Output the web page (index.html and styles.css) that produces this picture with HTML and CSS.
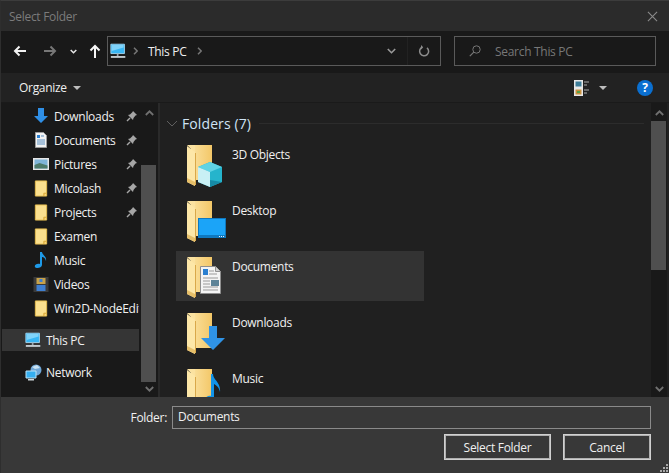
FILE: index.html
```html
<!DOCTYPE html>
<html lang="en">
<head>
    <meta charset="UTF-8">
    <title>Select Folder</title>
    <link rel="stylesheet" href="styles.css">
</head>
<body>
    <svg class="defs" width="0" height="0">
        <defs>
            <linearGradient id="backfill" x1="0" y1="0" x2="1" y2="0">
                <stop offset="0" stop-color="#fbe2a0"/>
                <stop offset="1" stop-color="#f3c768"/>
            </linearGradient>
            <symbol id="navfolder" viewBox="0 0 14 18">
                <path d="M1 1h12v16H1z" fill="#fbe08e" stroke="#e8bd4f"/>
                <path d="M10 17v-3h3" fill="#f3c95f" stroke="#d9a93a"/>
            </symbol>
            <symbol id="monitor" viewBox="0 0 20 18">
                <path d="M1 1h16v11H1z" fill="#38b6f4" stroke="#a9dcf5"/>
                <path d="M2 2h14v3L2 9z" fill="#7fd3fa"/>
                <path d="M8 12h2v3H8z" fill="#9aa7b0"/>
                <path d="M1 15h17v2H1z" fill="#d4dde2"/>
            </symbol>
            <symbol id="bigfolder" viewBox="0 0 26 42">
                <path d="M4 0h21v35H4z" fill="url(#backfill)"/>
                <path d="M0 0h8v8z" fill="#fbe2a0"/>
                <path d="M0 1l8 6v34l-8-4z" fill="#fde7a8"/>
                <path d="M0 33l8 4v4l-8-4z" fill="#e6bf6a"/>
                <path d="M8.500 8v32" stroke="#d9a84a"/>
            </symbol>
            <symbol id="pin" viewBox="0 0 12 12">
                <path d="M7 1l4 4-1.500.5L7.500 8 7 10 2 5l2-.500L6.500 2z" fill="#a6a6a6"/>
                <path d="M4 8l-3 3" stroke="#a6a6a6" stroke-width="1.500"/>
            </symbol>
        </defs>
    </svg>

    <div class="dialog">
        <header class="titlebar">
            <span class="title">Select Folder</span>
            <svg class="close" width="11" height="11" viewBox="0 0 12 12"><path d="M1 1l10 10M11 1L1 11" stroke="#8a8a8a" stroke-width="1.200"/></svg>
        </header>

        <div class="navbar">
            <svg class="nav-btn" width="14" height="12" viewBox="0 0 14 12"><path d="M13 6H2M6.500 1.500L2 6l4.500 4.500" fill="none" stroke="#f2f2f2" stroke-width="2"/></svg>
            <svg class="nav-btn fwd" width="14" height="12" viewBox="0 0 14 12"><path d="M1 6h11M7.500 1.500L12 6l-4.500 4.500" fill="none" stroke="#777" stroke-width="2"/></svg>
            <svg class="nav-btn drop" width="7" height="5" viewBox="0 0 7 5"><path d="M.700 1l2.800 2.800L6.300 1" fill="none" stroke="#e6e6e6" stroke-width="1.500"/></svg>
            <svg class="nav-btn up" width="12" height="14" viewBox="0 0 12 14"><path d="M6 14V2M1.500 6.500L6 2l4.500 4.500" fill="none" stroke="#f7f7f7" stroke-width="2"/></svg>
            <div class="address">
                <svg class="addr-pc" width="17" height="16"><use href="#monitor"/></svg>
                <svg class="crumb" width="5" height="8" viewBox="0 0 5 8"><path d="M1 .700L4.200 4 1 7.300" fill="none" stroke="#777" stroke-width="1.500"/></svg>
                <span class="addr-text">This PC</span>
                <svg class="crumb" width="5" height="8" viewBox="0 0 5 8"><path d="M1 .700L4.200 4 1 7.300" fill="none" stroke="#777" stroke-width="1.500"/></svg>
                <svg class="addr-drop" width="9" height="6" viewBox="0 0 9 6"><path d="M.800 1L4.500 4.700 8.200 1" fill="none" stroke="#9a9a9a" stroke-width="1.600"/></svg>
                <span class="addr-refresh">
                    <svg width="12" height="12" viewBox="0 0 12 12"><path d="M4.200 2.200A4.500 4.500 0 1 0 9 2.800" fill="none" stroke="#8c8c8c" stroke-width="1.500"/><path d="M3 0l2.200 2.300L3 4.600z" fill="#8c8c8c"/></svg>
                </span>
            </div>
            <div class="search">
                <svg width="12" height="12" viewBox="0 0 12 12"><circle cx="7.500" cy="4.500" r="3.700" fill="none" stroke="#777"/><path d="M4.800 7.200L.8 11.200" stroke="#777" stroke-width="1.200"/></svg>
                <span>Search This PC</span>
            </div>
        </div>

        <div class="toolbar">
            <span class="organize">Organize</span>
            <span class="caret"></span>
            <svg class="views" width="16" height="16" viewBox="0 0 16 16">
                <path d="M0 0h9v16H0z" fill="#e8e8e8"/>
                <path d="M1.500 1.500h6v5h-6z" fill="#3d7d99"/>
                <path d="M1.500 9.500h6v5h-6z" fill="#c8903c"/>
                <path d="M3 11h3v2H3z" fill="#5aa04a"/>
                <path d="M10 2h5M10 5h3M10 10h5M10 13h3" stroke="#aaa"/>
            </svg>
            <span class="caret caret-views"></span>
            <span class="help">?</span>
        </div>

        <div class="panes">
            <nav class="tree">
                <div class="tree-list">
                    <div class="tree-row">
                        <svg class="tree-icon" height="16" viewBox="0 0 16 16"><path d="M5 0h6v8h4l-7 7-7-7h4z" fill="#2f8fe6"/></svg>
                        <span class="tree-label">Downloads</span>
                        <svg class="pin" width="12" height="12"><use href="#pin"/></svg>
                    </div>
                    <div class="tree-row">
                        <svg class="tree-icon" height="16" viewBox="0 0 16 16"><path d="M2.500.500h8l3 3v12h-11z" fill="#f2f2f2" stroke="#9a9a9a"/><path d="M4 3h3v3H4z" fill="#2a7fd0"/><path d="M8 4h3M4 8h8M4 10h8M4 12h8" stroke="#5b8fc0"/></svg>
                        <span class="tree-label">Documents</span>
                        <svg class="pin" width="12" height="12"><use href="#pin"/></svg>
                    </div>
                    <div class="tree-row">
                        <svg class="tree-icon" height="16" viewBox="0 0 16 16"><path d="M0 2h16v12H0z" fill="#e6e6e6"/><path d="M1.500 3.500h13v9h-13z" fill="#7fb4d8"/><path d="M1.500 9l5-2 8 2.500v3h-13z" fill="#4d7a6a"/></svg>
                        <span class="tree-label">Pictures</span>
                        <svg class="pin" width="12" height="12"><use href="#pin"/></svg>
                    </div>
                    <div class="tree-row">
                        <svg class="tree-icon" height="17"><use href="#navfolder"/></svg>
                        <span class="tree-label">Micolash</span>
                        <svg class="pin" width="12" height="12"><use href="#pin"/></svg>
                    </div>
                    <div class="tree-row">
                        <svg class="tree-icon" height="17"><use href="#navfolder"/></svg>
                        <span class="tree-label">Projects</span>
                        <svg class="pin" width="12" height="12"><use href="#pin"/></svg>
                    </div>
                    <div class="tree-row">
                        <svg class="tree-icon" height="17"><use href="#navfolder"/></svg>
                        <span class="tree-label">Examen</span>
                    </div>
                    <div class="tree-row">
                        <svg class="tree-icon" height="18" viewBox="0 0 14 18"><path d="M6 1h2c0 3 5 4 4 9-1-3-2-4-4-4v8c0 3-6 4-7 2s2-4 5-3z" fill="#1e9ae8"/></svg>
                        <span class="tree-label">Music</span>
                    </div>
                    <div class="tree-row">
                        <svg class="tree-icon" height="15" viewBox="0 0 15 15"><path d="M0 0h15v15H0z" fill="#3a3a3a"/><path d="M3 1h9v6H3z" fill="#c7a24a"/><path d="M3 8h9v6H3z" fill="#3f7fd0"/><path d="M6 2h3v3H6z" fill="#3f7fd0"/></svg>
                        <span class="tree-label">Videos</span>
                    </div>
                    <div class="tree-row">
                        <svg class="tree-icon" height="17"><use href="#navfolder"/></svg>
                        <span class="tree-label">Win2D-NodeEditor</span>
                    </div>
                    <div class="tree-row root selected">
                        <svg class="tree-icon" height="16"><use href="#monitor"/></svg>
                        <span class="tree-label">This PC</span>
                    </div>
                    <div class="tree-row root network">
                        <svg class="tree-icon" height="17" viewBox="0 0 17 17"><circle cx="11" cy="6" r="5.500" fill="#6fa6d6"/><path d="M7 3l5-2 3 3-5 1z" fill="#c9e2f2"/><path d="M1 7h10v7H1z" fill="#35aef0" stroke="#bde3f7"/><path d="M3 15h6v1.500H3z" fill="#cfd8dd"/></svg>
                        <span class="tree-label">Network</span>
                    </div>
                </div>
                <div class="scrollbar">
                    <svg class="arrow" width="9" height="6" viewBox="0 0 9 6"><path d="M.800 5L4.500 1.300 8.200 5" fill="none" stroke="#707070" stroke-width="1.800"/></svg>
                    <div class="track tree-track"><div class="thumb"></div></div>
                    <svg class="arrow" width="9" height="6" viewBox="0 0 9 6"><path d="M.800 1L4.500 4.700 8.200 1" fill="none" stroke="#707070" stroke-width="1.800"/></svg>
                </div>
            </nav>

            <main class="content">
                <div class="listing">
                    <div class="group-head">
                        <svg width="12" height="7" viewBox="0 0 12 7"><path d="M1 1l5 5 5-5" fill="none" stroke="#5f5f5f"/></svg>
                        <span class="group-title">Folders (7)</span>
                        <span class="group-line"></span>
                    </div>
                    <div class="item">
                        <div class="thumbicon">
                            <svg width="26" height="42"><use href="#bigfolder"/></svg>
                            <svg class="badge" width="24" height="25" viewBox="0 0 24 25"><path d="M12 0l12 5v15l-12 5L0 20V5z" fill="#25b4cc"/><path d="M12 0l12 5-12 5L0 5z" fill="#5fd3e4"/><path d="M0 5l12 5v15L0 20z" fill="#c9f0f5"/><path d="M12 18l12 2-12 5z" fill="#168aa6"/></svg>
                        </div>
                        <span class="item-name">3D Objects</span>
                    </div>
                    <div class="item">
                        <div class="thumbicon">
                            <svg width="26" height="42"><use href="#bigfolder"/></svg>
                            <svg class="badge badge-desktop" width="28" height="20" viewBox="0 0 28 20"><path d="M0 0h28v20H0z" fill="#0f78bf"/><path d="M1 1h26v16H1z" fill="#1ba4f8"/><path d="M21 18h1v1h-1zM23 18h1v1h-1zM25 18h1v1h-1z" fill="#e8f4fb"/></svg>
                        </div>
                        <span class="item-name">Desktop</span>
                    </div>
                    <div class="item selected">
                        <div class="thumbicon">
                            <svg width="26" height="42"><use href="#bigfolder"/></svg>
                            <svg class="badge badge-doc" width="21" height="28" viewBox="0 0 21 28"><path d="M.500.500h15l5 5v22H.500z" fill="#f4f4f4" stroke="#8f8f8f"/><path d="M15.500.500v5h5" fill="#cfcfcf" stroke="#8f8f8f"/><path d="M3 3h5v6H3z" fill="#2a7fd0"/><path d="M9 5h5M9 8h8M3 12h15M3 15h7M3 18h7M3 21h15M3 24h15" stroke="#9a9a9a"/><path d="M11 14h8v6h-8z" fill="#5d8397"/></svg>
                        </div>
                        <span class="item-name">Documents</span>
                    </div>
                    <div class="item">
                        <div class="thumbicon">
                            <svg width="26" height="42"><use href="#bigfolder"/></svg>
                            <svg class="badge badge-down" width="24" height="24" viewBox="0 0 24 24"><path d="M8 0h8v12h8L12 24 0 12h8z" fill="#2f93e6"/></svg>
                        </div>
                        <span class="item-name">Downloads</span>
                    </div>
                    <div class="item">
                        <div class="thumbicon">
                            <svg width="26" height="42"><use href="#bigfolder"/></svg>
                            <svg class="badge badge-music" width="17" height="30" viewBox="0 0 17 30"><path d="M6 0h2c0 6 8 8 7 18-1-5-4-7-6-8v14c0 4-8 6-9 3s3-6 6-5z" fill="#1193e8"/></svg>
                        </div>
                        <span class="item-name">Music</span>
                    </div>
                </div>
                <div class="scrollbar main-scroll">
                    <svg class="arrow" width="9" height="6" viewBox="0 0 9 6"><path d="M.800 5L4.500 1.300 8.200 5" fill="none" stroke="#707070" stroke-width="1.800"/></svg>
                    <div class="track main-track"><div class="thumb"></div></div>
                    <svg class="arrow" width="9" height="6" viewBox="0 0 9 6"><path d="M.800 1L4.500 4.700 8.200 1" fill="none" stroke="#707070" stroke-width="1.800"/></svg>
                </div>
            </main>
        </div>

        <footer class="footer">
            <div class="folder-row">
                <label class="folder-label">Folder:</label>
                <div class="folder-input">Documents</div>
            </div>
            <div class="buttons">
                <button class="btn btn-select">Select Folder</button>
                <button class="btn btn-cancel">Cancel</button>
            </div>
            <svg class="grip" width="9" height="9" viewBox="0 0 9 9"><path d="M6 0h2v2H6zM3 3h2v2H3zM6 3h2v2H6zM0 6h2v2H0zM3 6h2v2H3zM6 6h2v2H6z" fill="#a8a8a8"/></svg>
        </footer>
    </div>
</body>
</html>
```

FILE: styles.css
```css
html,
body {
    margin: 0;
    padding: 0;
    overflow: hidden;
}

body {
    width: 669px;
    height: 473px;
    background: #2b2b2b;
    font-family: "Open Sans", "Noto Sans", sans-serif;
    font-size: 12px;
    letter-spacing: -0.3px;
    color: #f0f0f0;
}

.defs {
    position: absolute;
}

svg {
    display: block;
    flex: none;
}

.dialog {
    display: flex;
    flex-direction: column;
    height: 473px;
    box-sizing: border-box;
    border-top: 1px solid #3c3c3c;
    border-left: 1px solid #2e2e2e;
}

/* title */
.titlebar {
    display: flex;
    align-items: center;
    justify-content: space-between;
    height: 30px;
    padding: 0 11px 0 8px;
    background: #2b2b2b;
    flex: none;
}

.title {
    color: #7b7b7b;
}

/* back / forward / address / search */
.navbar {
    display: flex;
    align-items: center;
    height: 42px;
    box-sizing: border-box;
    padding-bottom: 2px;
    background: #191919;
    flex: none;
}

.nav-btn {
    margin-left: 12px;
}

.nav-btn.fwd {
    margin-left: 16px;
}

.nav-btn.drop {
    margin-left: 13px;
}

.nav-btn.up {
    margin-left: 12px;
}

.address,
.search {
    display: flex;
    align-items: center;
    height: 30px;
    box-sizing: border-box;
    border: 1px solid #5a5a5a;
}

.address {
    width: 334px;
    margin-left: 6px;
    padding-left: 2px;
}

.addr-text {
    margin: 0 10px;
}

.addr-pc + .crumb {
    margin-left: 6px;
}

.addr-drop {
    margin-left: auto;
    margin-right: 11px;
}

.addr-refresh {
    display: flex;
    align-items: center;
    justify-content: center;
    width: 32px;
    height: 28px;
    border-left: 1px solid #222;
}

.search {
    width: 202px;
    margin-left: 13px;
    padding-left: 14px;
    color: #777;
}

.search span {
    margin-left: 14px;
}

/* organize row */
.toolbar {
    display: flex;
    align-items: center;
    height: 30px;
    box-sizing: border-box;
    border-bottom: 1px solid #1a1a1a;
    background: #222222;
    flex: none;
}

.organize {
    margin-left: 18px;
}

.caret {
    width: 0;
    height: 0;
    margin-left: 6px;
    border-left: 4px solid transparent;
    border-right: 4px solid transparent;
    border-top: 4px solid #bdbdbd;
}

.views {
    margin-left: auto;
}

.caret-views {
    margin-left: 9px;
}

.help {
    width: 16px;
    height: 16px;
    margin: 0 16px 0 30px;
    border-radius: 50%;
    background: #0a6fd0;
    color: #fff;
    font-weight: bold;
    line-height: 16px;
    text-align: center;
}

/* panes */
.panes {
    display: flex;
    height: 294px;
    flex: none;
    background: #2a2a2a;
}

.tree {
    display: flex;
    width: 157px;
    margin-right: 2px;
    background: #191919;
    flex: none;
}

.tree-list {
    width: 138px;
    margin-right: 2px;
    padding-top: 1px;
    overflow: hidden;
    flex: none;
}

.tree-row {
    display: flex;
    align-items: center;
    height: 24px;
    padding-left: 32px;
    white-space: nowrap;
    overflow: hidden;
}

.tree-icon {
    width: 16px;
}

.tree-label {
    margin-left: 5px;
    color: #f0f0f0;
    flex: none;
}

.tree-row .pin {
    margin-left: auto;
    margin-right: 1px;
}

.tree-row.root {
    margin-left: 1px;
    padding-left: 23px;
}

.tree-row.root .tree-icon {
    width: 17px;
}

.tree-row.root .tree-label {
    margin-left: 4px;
}

.tree-row.selected {
    width: 137px;
    height: 22px;
    margin-top: 9px;
    padding-right: 0;
    box-sizing: border-box;
    background: #353535;
}

.tree-row.network {
    margin-top: 9px;
}

.scrollbar {
    display: flex;
    flex-direction: column;
    align-items: center;
    justify-content: space-between;
    width: 16px;
    flex: none;
    padding: 7px 0 5px;
    box-sizing: border-box;
}

.track {
    flex: 1;
    width: 100%;
    margin: 4px 0;
}

.thumb {
    background: #4f4f4f;
    width: 15px;
}

.tree-track {
    padding-top: 45px;
    box-sizing: border-box;
}

.tree-track .thumb {
    height: 217px;
}

.content {
    display: flex;
    flex: 1;
    min-width: 0;
    background: #202020;
    overflow: hidden;
}

.listing {
    flex: 1;
    min-width: 0;
    overflow: hidden;
    padding-left: 6px;
}

.group-head {
    display: flex;
    align-items: center;
    height: 26px;
    margin: 7px 0 3px;
}

.group-title {
    margin-left: 4px;
    color: #cfe4f5;
    font-size: 14px;
    letter-spacing: 0.1px;
}

.group-line {
    flex: 1;
    height: 1px;
    margin: 0 7px 0 8px;
    background: #2c2c2c;
}

.item {
    display: flex;
    width: 248px;
    height: 50px;
    margin: 0 0 6px 10px;
    padding-left: 11px;
    box-sizing: border-box;
}

.item.selected {
    background: #333333;
}

.thumbicon {
    position: relative;
    width: 40px;
    height: 42px;
    flex: none;
    margin-top: 6px;
}

.badge {
    position: absolute;
    left: 11px;
    top: 17px;
}

.badge-doc {
    left: 13px;
    top: 9px;
}

.badge-down {
    left: 14px;
    top: 13px;
}

.badge-music {
    left: 18px;
    top: 5px;
}

.item-name {
    margin: 7px 0 0 5px;
}

.main-scroll {
    margin-right: 2px;
    background: #191919;
}

.main-track {
    padding-top: 1px;
    box-sizing: border-box;
}

.main-track .thumb {
    height: 149px;
}

/* bottom */
.footer {
    position: relative;
    flex: 1;
    background: #383838;
}

.folder-row {
    display: flex;
    align-items: center;
    justify-content: flex-end;
    height: 23px;
    margin: 9px 18px 0 0;
}

.folder-label {
    margin-right: 5px;
}

.folder-input {
    width: 479px;
    height: 23px;
    box-sizing: border-box;
    border: 1px solid #8a8a8a;
    padding-left: 5px;
    line-height: 19px;
}

.buttons {
    display: flex;
    justify-content: flex-end;
    margin: 5px 18px 0 0;
}

.btn {
    height: 26px;
    margin-left: 12px;
    padding: 0;
    box-sizing: border-box;
    border: 1px solid #d0d0d0;
    outline: 1px solid #b0b0b0;
    outline-offset: -2px;
    background: #383838;
    color: #f0f0f0;
    font: inherit;
    letter-spacing: inherit;
}

.btn-select {
    width: 107px;
}

.btn-cancel {
    width: 88px;
}

.grip {
    position: absolute;
    right: 0;
    bottom: 0;
}
```
